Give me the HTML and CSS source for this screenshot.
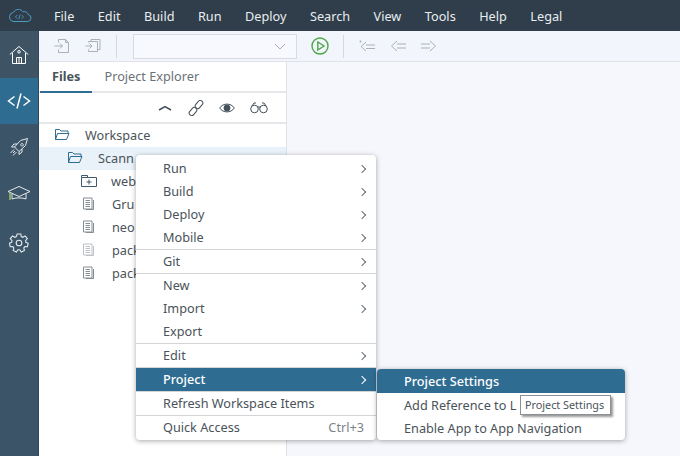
FILE: index.html
```html
<!DOCTYPE html>
<html lang="en">

<head>
    <meta charset="UTF-8">
    <title>Web IDE</title>
    <link rel="stylesheet" href="styles.css">
</head>

<body>
    <header class="menubar">
        <svg class="logo" width="25" height="13" viewBox="0 0 25 13" fill="none" stroke="#4d9cc4" stroke-width="1">
            <path d="M6 12.500H20.500a3.500 3.500 0 0 0 .8-6.900 4 4 0 0 0-5.300-2.700A5.500 5.500 0 0 0 6.500 3.300 4.700 4.700 0 0 0 6 12.500Z" />
            <path d="M10.300 6 8.500 7.800l1.800 1.800M14.700 6l1.800 1.800-1.800 1.800M13.200 5.500l-1.400 4.600" stroke-width=".9" />
        </svg>
        <nav class="menus">
            <span>File</span>
            <span>Edit</span>
            <span>Build</span>
            <span>Run</span>
            <span>Deploy</span>
            <span>Search</span>
            <span>View</span>
            <span>Tools</span>
            <span>Help</span>
            <span>Legal</span>
        </nav>
    </header>

    <div class="main">
        <aside class="rail">
            <div class="rail-item home">
                <svg width="20" height="20" viewBox="0 0 20 20" fill="none" stroke="#fff" stroke-width="1">
                    <path d="M.8 9.500 10 1.500l9.200 8M3.500 8v10.500h13V8" />
                    <circle cx="10" cy="6.800" r="1.300" />
                    <path d="M7.500 18.500v-6h5v6M10 12.500v6" />
                </svg>
            </div>
            <div class="rail-item active">
                <svg width="24" height="18" viewBox="0 0 24 18" fill="none" stroke="#fff" stroke-width="1.500">
                    <path d="M7.500 4.500 1.500 9l6 4.500M16.500 4.500l6 4.500-6 4.500M14 1.500 10 16.500" />
                </svg>
            </div>
            <div class="rail-item rocket">
                <svg width="20" height="20" viewBox="0 0 20 20" fill="none" stroke="#e4eaee" stroke-width="1">
                    <path d="M18.500 1.500 11.500 3.500 5.500 10l4.500 4.500 6.500-6zM13 6.500a1.300 1.300 0 1 0 .1 0M5.500 10H2.500l2.500-3h3M10 14.500v3l3-2.500v-3M5 12.500l-3.500 3.500M7.500 15 4 18.500M6 14l-2 2" />
                </svg>
            </div>
            <div class="rail-item learn">
                <svg width="24" height="18" viewBox="0 0 24 18" fill="none" stroke="#e4eaee" stroke-width="1">
                    <path d="M1 6.500 12 1.500l11 5-11 5zM5 9v5c3-1.500 11-1.500 14 0V9" />
                    <path d="M3 8v7" stroke="#9cc45a" stroke-width="1.500" />
                </svg>
            </div>
            <div class="rail-item">
                <svg width="20" height="20" viewBox="0 0 20 20" fill="none" stroke="#e4eaee" stroke-width="1.100">
                    <circle cx="10" cy="10" r="2.800" />
                    <path d="M8.200 1h3.600l.5 2.600 1.500.7 2.300-1.400 2.200 2.700-1.700 2 .3 1.700 2.300 1-.8 3.400-2.600-.1-1 1.300.6 2.600-3.200 1.500-1.500-2.200h-1.800l-1.500 2.200-3.200-1.500.6-2.600-1-1.300-2.600.1-.8-3.400 2.300-1 .3-1.700-1.700-2 2.200-2.700 2.300 1.400 1.500-.7z" />
                </svg>
            </div>
        </aside>

        <div class="workarea">
            <div class="toolbar">
                <svg class="tool" width="16" height="16" viewBox="0 0 16 16" fill="none" stroke="#a9b0b6">
                    <path d="M4.500 4.500V1.500h7l3 3v10h-10v-3M.5 8h8M6 5.500 8.500 8 6 10.500M11.500 1.500v3h3" />
                </svg>
                <svg class="tool" width="16" height="16" viewBox="0 0 16 16" fill="none" stroke="#a9b0b6">
                    <path d="M3.500 4.500v-1h9v10h-9v-2M6 3.500v-2h9v10h-2.500M.5 8h6M4.500 5.500 7 8l-2.500 2.500" />
                </svg>
                <div class="tool-sep"></div>
                <div class="run-select">
                    <svg width="12" height="7" viewBox="0 0 12 7" fill="none" stroke="#a9b0b6">
                        <path d="M1 1l5 5 5-5" />
                    </svg>
                </div>
                <svg class="run-btn" width="18" height="18" viewBox="0 0 18 18" fill="none" stroke="#4ea64a" stroke-width="1.400">
                    <circle cx="9" cy="9" r="8" />
                    <path d="M6.800 5v8L13 9z" />
                </svg>
                <div class="tool-sep second"></div>
                <svg class="nav-icon" width="17" height="12" viewBox="0 0 17 12" fill="none" stroke="#a9b0b6">
                    <path d="M7 2 2 6.500 7 11M7 5h9M7 8.500h9" />
                    <circle cx="1.500" cy="1.500" r="1" fill="#a9b0b6" stroke="none" />
                </svg>
                <svg class="nav-icon" width="17" height="12" viewBox="0 0 17 12" fill="none" stroke="#a9b0b6">
                    <path d="M7 1 1.500 6 7 11M7 4h9M7 8h9" />
                </svg>
                <svg class="nav-icon" width="17" height="12" viewBox="0 0 17 12" fill="none" stroke="#a9b0b6">
                    <path d="M10 1l5.500 5L10 11M10 4H1M10 8H1" />
                </svg>
            </div>

            <div class="panes">
                <section class="files">
                    <div class="tabs">
                        <span class="tab current">Files</span>
                        <span class="tab">Project Explorer</span>
                    </div>
                    <div class="tree-tools">
                        <svg width="15" height="6" viewBox="0 0 15 6" fill="none" stroke="#44505a" stroke-width="1.500">
                            <path d="M1 5l6-3.500L13 5" />
                        </svg>
                        <svg width="16" height="16" viewBox="0 0 16 16" fill="none" stroke="#44505a">
                            <rect x="8.500" y="0" width="5" height="9" rx="2.500" transform="rotate(40 11 4.500)" />
                            <rect x="2.500" y="7" width="5" height="9" rx="2.500" transform="rotate(40 5 11.500)" />
                        </svg>
                        <svg width="16" height="12" viewBox="0 0 16 12" fill="none" stroke="#44505a">
                            <path d="M.7 6C4 .8 12 .8 15.300 6 12 11.200 4 11.200.7 6Z" />
                            <circle cx="8" cy="6" r="3" fill="#44505a" />
                        </svg>
                        <svg width="18" height="12" viewBox="0 0 18 12" fill="none" stroke="#44505a">
                            <circle cx="4.500" cy="7" r="3.800" />
                            <circle cx="13.500" cy="7" r="3.800" />
                            <path d="M7.500 5h3M2 4 4 1h2M16 4l-2-3h-2" />
                        </svg>
                    </div>
                    <ul class="tree">
                        <li class="depth0">
                            <svg class="folder" width="16" height="13" viewBox="0 0 16 13" fill="none" stroke="#2f6c92">
                                <path d="M1.500 11.500V1.500h4l1.500 1.500h7v2M1.500 11.500h11l2.500-6H3.500z" />
                            </svg>
                            Workspace
                        </li>
                        <li class="depth1 selected">
                            <svg class="folder" width="16" height="13" viewBox="0 0 16 13" fill="none" stroke="#2f6c92">
                                <path d="M1.500 11.500V1.500h4l1.500 1.500h7v2M1.500 11.500h11l2.500-6H3.500z" />
                            </svg>
                            Scann
                        </li>
                        <li class="depth2">
                            <svg class="folder new" width="16" height="13" viewBox="0 0 16 13" fill="none" stroke="#3f5a6e">
                                <path d="M.5 12.500V3.500h15v9zM.5 3.500v-2h6v2M8 5.500v5M5.500 8h5" />
                            </svg>
                            web
                        </li>
                        <li class="depth2">
                            <svg class="doc" width="11" height="13" viewBox="0 0 11 13" fill="none" stroke="#858d94">
                                <path d="M.5 1h8.500v11H.5zM2.500 3.500h4.500M2.500 5.500h4.500M2.500 7.500h4.500M2.500 9.500h4.500M10.500 3v9.500H3" />
                            </svg>
                            Gru
                        </li>
                        <li class="depth2">
                            <svg class="doc" width="11" height="13" viewBox="0 0 11 13" fill="none" stroke="#858d94">
                                <path d="M.5 1h8.500v11H.5zM2.500 3.500h4.500M2.500 5.500h4.500M2.500 7.500h4.500M2.500 9.500h4.500M10.500 3v9.500H3" />
                            </svg>
                            neo
                        </li>
                        <li class="depth2">
                            <svg class="doc" width="11" height="13" viewBox="0 0 11 13" fill="none" stroke="#bcc2c7">
                                <path d="M.5 1h8.500v11H.5zM2.500 3.500h4.500M2.500 5.500h4.500M2.500 7.500h4.500M2.500 9.500h4.500M10.500 3v9.500H3" />
                            </svg>
                            pack
                        </li>
                        <li class="depth2">
                            <svg class="doc" width="11" height="13" viewBox="0 0 11 13" fill="none" stroke="#858d94">
                                <path d="M.5 1h8.500v11H.5zM2.500 3.500h4.500M2.500 5.500h4.500M2.500 7.500h4.500M2.500 9.500h4.500M10.500 3v9.500H3" />
                            </svg>
                            pack
                        </li>
                    </ul>
                </section>
                <section class="editor"></section>
            </div>
        </div>
    </div>

    <div class="menu context">
        <div class="item arrow">Run</div>
        <div class="item arrow">Build</div>
        <div class="item arrow">Deploy</div>
        <div class="item arrow">Mobile</div>
        <div class="sep"></div>
        <div class="item arrow">Git</div>
        <div class="sep"></div>
        <div class="item arrow">New</div>
        <div class="item arrow">Import</div>
        <div class="item">Export</div>
        <div class="sep"></div>
        <div class="item arrow">Edit</div>
        <div class="sep"></div>
        <div class="item arrow hot">Project</div>
        <div class="sep"></div>
        <div class="item">Refresh Workspace Items</div>
        <div class="sep"></div>
        <div class="item">Quick Access<span class="shortcut">Ctrl+3</span></div>
    </div>

    <div class="menu submenu">
        <div class="item hot">Project Settings</div>
        <div class="item">Add Reference to L</div>
        <div class="item">Enable App to App Navigation</div>
    </div>

    <div class="tooltip">Project Settings</div>
</body>

</html>
```

FILE: styles.css
```css
html,
body {
    width: 100%;
    height: 100%;
    margin: 0;
    overflow: hidden;
}

body {
    display: flex;
    flex-direction: column;
    font-family: "Noto Sans", "Open Sans", sans-serif;
    font-size: 12.700px;
    color: #4a5359;
    background-color: #f5f7fd;
}

.menubar {
    display: flex;
    align-items: center;
    height: 31px;
    flex: none;
    background-color: #2f3e4a;
    color: #e9edf0;
}

.logo {
    margin-left: 7px;
}

.menus {
    display: flex;
    gap: 23.500px;
    margin-left: 22px;
}

.main {
    display: flex;
    flex: 1;
    min-height: 0;
}

.rail {
    width: 38px;
    flex: none;
    background-color: #3b5467;
    border-right: 1px solid #33475a;
}

.rail-item {
    display: flex;
    align-items: center;
    justify-content: center;
    height: 48px;
}

.rail-item.home {
    height: 47px;
    background-color: #3e5464;
}

.rail-item.active {
    height: 46px;
    background-color: #2f6c92;
}

.rail-item.rocket {
    height: 45px;
}

.rail-item.learn {
    height: 50px;
}

.workarea {
    display: flex;
    flex-direction: column;
    flex: 1;
    min-width: 0;
}

.toolbar {
    display: flex;
    align-items: center;
    height: 31px;
    flex: none;
    box-sizing: border-box;
    padding-left: 15px;
    background-color: #f2f5fc;
    border-bottom: 1px solid #e0e2e6;
}

.tool {
    margin-right: 15px;
}

.tool-sep {
    width: 1px;
    height: 23px;
    margin-right: 16px;
    background-color: #d5d8dc;
}

.tool-sep.second {
    margin: 0 15px 0 14px;
}

.run-select {
    display: flex;
    align-items: center;
    justify-content: flex-end;
    box-sizing: border-box;
    width: 164px;
    height: 25px;
    padding-right: 10px;
    background-color: #f7f9fe;
    border: 1px solid #d8dce0;
}

.run-btn {
    margin-left: 14px;
}

.nav-icon {
    margin-right: 13.500px;
}

.panes {
    display: flex;
    flex: 1;
    min-height: 0;
}

.files {
    width: 247px;
    flex: none;
    background-color: #fff;
    border-right: 1px solid #e0e2e6;
}

.tabs {
    display: flex;
    height: 31px;
    box-sizing: border-box;
    padding-left: 1px;
    border-bottom: 2px solid #e6e7e9;
}

.tab {
    height: 29px;
    padding: 0 12px;
    line-height: 29px;
    color: #6a7278;
}

.tab.current {
    font-weight: bold;
    color: #4a5359;
    border-bottom: 2px solid #2f6c92;
}

.tree-tools {
    display: flex;
    align-items: center;
    justify-content: flex-end;
    gap: 15px;
    height: 29px;
    padding-right: 18px;
    border-bottom: 2px solid #e6e7e9;
}

.tree {
    margin: 0;
    padding: 0;
    list-style: none;
}

.tree li {
    display: flex;
    align-items: center;
    box-sizing: border-box;
    height: 23px;
    padding-bottom: 2px;
    white-space: nowrap;
}

.tree .selected {
    background-color: #e9f2f9;
}

.depth0 {
    padding-left: 15px;
}

.depth1 {
    padding-left: 28px;
}

.depth2 {
    padding-left: 42px;
}

.folder {
    margin-right: 15px;
}

.folder.new {
    margin-right: 14px;
}

.doc {
    margin: 0 18px 0 2px;
}

.menu {
    position: absolute;
    box-sizing: border-box;
    background-color: #fff;
    border-radius: 4px;
    box-shadow: 0 1px 5px rgba(0, 0, 0, 0.35);
}

.context {
    top: 155px;
    left: 136px;
    width: 240px;
    height: 285px;
    padding-top: 2px;
}

.submenu {
    top: 369px;
    left: 377px;
    width: 248px;
    height: 71px;
}

.item {
    position: relative;
    height: 23px;
    padding-left: 27px;
    line-height: 23px;
    white-space: nowrap;
}

.submenu .item {
    height: 23.500px;
    line-height: 25px;
}

.item.hot {
    background-color: #2f6c92;
    color: #fff;
    font-weight: 500;
}

.submenu .item.hot {
    border-radius: 4px 4px 0 0;
}

.arrow::after {
    content: "";
    position: absolute;
    top: 9px;
    right: 11px;
    width: 5px;
    height: 5px;
    border-top: 1px solid #667078;
    border-right: 1px solid #667078;
    transform: rotate(45deg);
}

.arrow.hot::after {
    border-color: #fff;
}

.sep {
    height: 1px;
    background-color: #d2d5d8;
}

.shortcut {
    position: absolute;
    right: 12px;
    color: #7b8389;
}

.tooltip {
    position: absolute;
    top: 395px;
    left: 520px;
    box-sizing: border-box;
    width: 91px;
    height: 20px;
    padding-left: 4px;
    background-color: #fff;
    border: 1px solid #8a9096;
    box-shadow: 2px 2px 2px rgba(0, 0, 0, 0.4);
    font-size: 10.800px;
    line-height: 18px;
    white-space: nowrap;
}
```
